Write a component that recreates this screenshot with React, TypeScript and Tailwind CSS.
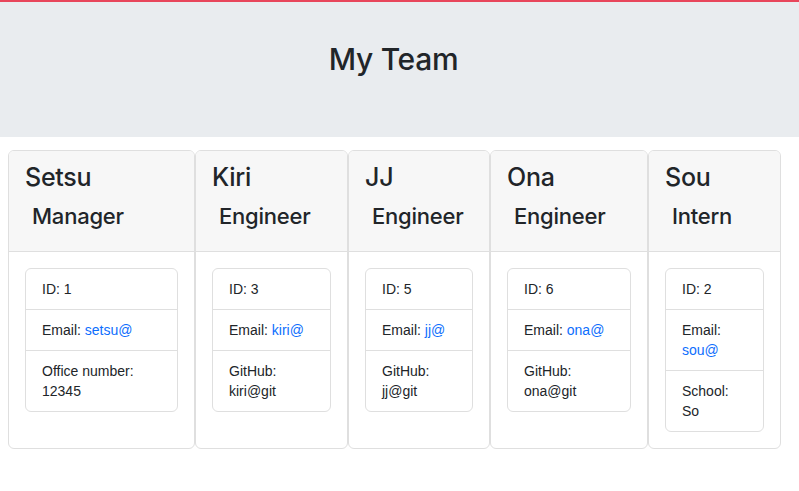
import React from 'react';

type Member = {
  name: string;
  role: string;
  id: number;
  email: string;
  extraLabel: string;
  extra: string;
  width: string;
};

const team: Member[] = [
  { name: 'Setsu', role: 'Manager', id: 1, email: 'setsu@', extraLabel: 'Office number', extra: '12345', width: 'w-[187px]' },
  { name: 'Kiri', role: 'Engineer', id: 3, email: 'kiri@', extraLabel: 'GitHub', extra: 'kiri@git', width: 'w-[153px]' },
  { name: 'JJ', role: 'Engineer', id: 5, email: 'jj@', extraLabel: 'GitHub', extra: 'jj@git', width: 'w-[142px]' },
  { name: 'Ona', role: 'Engineer', id: 6, email: 'ona@', extraLabel: 'GitHub', extra: 'ona@git', width: 'w-[158px]' },
  { name: 'Sou', role: 'Intern', id: 2, email: 'sou@', extraLabel: 'School', extra: 'So', width: 'w-[133px]' },
];

const heading = "font-['Inter','Liberation_Sans',sans-serif] font-medium tracking-[-0.01em] text-[#212529]";

function MemberCard({ m }: { m: Member }) {
  return (
    <div className={`${m.width} shrink-0 flex flex-col bg-white border border-[#dfdfdf] rounded-[6px]`}>
      {/* header */}
      <div className="bg-[#f7f7f7] border-b border-[#dfdfdf] rounded-t-[5px] px-4 pt-[11px] pb-[21px]">
        <h3 className={`${heading} text-[25px] leading-[31px]`}>{m.name}</h3>
        <h4 className={`${heading} text-[22px] leading-[27px] mt-[10px] pl-[7px]`}>{m.role}</h4>
      </div>

      {/* body */}
      <div className="p-4 flex-1">
        <ul className="border border-[#dfdfdf] rounded-[6px] text-[14px] leading-5 text-[#212529]">
          <li className="px-4 py-[10px]">ID: {m.id}</li>
          <li className="px-4 py-[10px] border-t border-[#dfdfdf]">
            Email: <a href={`mailto:${m.email}`} className="text-[#0d6efd]">{m.email}</a>
          </li>
          <li className="px-4 py-[10px] border-t border-[#dfdfdf]">
            {m.extraLabel}: {m.extra}
          </li>
        </ul>
      </div>
    </div>
  );
}

export default function App() {
  return (
    <div className="min-h-[491px] bg-white font-['Liberation_Sans',Arial,sans-serif]">
      <div className="h-[2px] bg-[#e8465b]" />
      <div className="h-[135px] bg-[#e9ecef] flex items-center justify-center">
        <h1 className={`${heading} text-[30px] leading-[38px] -mt-[22px] mr-[12px]`}>My Team</h1>
      </div>

      <div className="flex items-stretch pl-2 mt-[13px]">
        {team.map((m) => (
          <MemberCard key={m.id} m={m} />
        ))}
      </div>
    </div>
  );
}
